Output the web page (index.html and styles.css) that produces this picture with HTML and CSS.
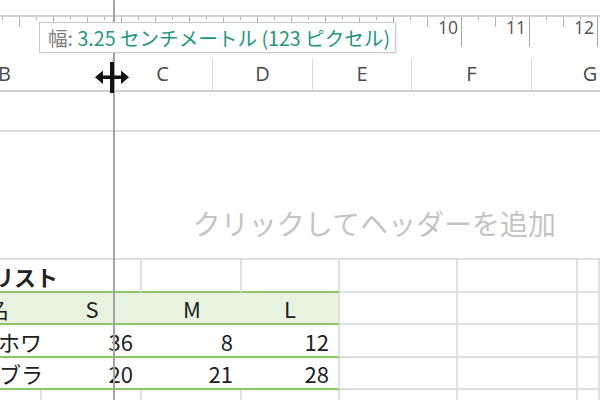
FILE: index.html
```html
<!DOCTYPE html>
<html lang="ja">
<head>
<meta charset="utf-8">
<title>Excel ページレイアウト</title>
<link rel="stylesheet" href="styles.css">
</head>
<body>
<div class="sheet">
  <div class="topgap"></div>
  <div class="ruler">
    <div class="cm"></div>
    <div class="cm"></div>
    <div class="cm"></div>
    <div class="cm"></div>
    <div class="cm"></div>
    <div class="cm"></div>
    <div class="cm"></div>
    <div class="cm"><span class="num">10</span></div>
    <div class="cm"><span class="num">11</span></div>
    <div class="cm"><span class="num">12</span></div>
  </div>
  <div class="colhead">
    <div class="col col-b">B</div>
    <div class="col col-c">C</div>
    <div class="col col-d">D</div>
    <div class="col col-e">E</div>
    <div class="col col-f">F</div>
    <div class="col col-g">G</div>
  </div>
  <div class="margin-band"></div>
  <div class="page-header">
    <span class="header-hint">クリックしてヘッダーを追加</span>
  </div>
  <div class="grid">
    <div class="row title-row">
      <div class="cell a tb nob"><span class="t-title">リスト</span></div>
      <div class="cell tb"></div>
      <div class="cell tb"></div>
      <div class="cell tb"></div>
      <div class="cell"></div>
      <div class="cell"></div>
      <div class="cell"></div>
    </div>
    <div class="row head-row">
      <div class="cell a tb nob hd"><span class="t-name">名</span></div>
      <div class="cell tb nob hd ctr">S</div>
      <div class="cell tb nob hd ctr">M</div>
      <div class="cell tb hd ctr">L</div>
      <div class="cell"></div>
      <div class="cell"></div>
      <div class="cell"></div>
    </div>
    <div class="row">
      <div class="cell a tb nob"><span class="t-white">ホワイト</span></div>
      <div class="cell tb nob num-cell">36</div>
      <div class="cell tb nob num-cell">8</div>
      <div class="cell tb num-cell">12</div>
      <div class="cell"></div>
      <div class="cell"></div>
      <div class="cell"></div>
    </div>
    <div class="row">
      <div class="cell a tb nob"><span class="t-black">ブラック</span></div>
      <div class="cell tb nob num-cell">20</div>
      <div class="cell tb nob num-cell">21</div>
      <div class="cell tb num-cell">28</div>
      <div class="cell"></div>
      <div class="cell"></div>
      <div class="cell"></div>
    </div>
    <div class="row">
      <div class="cell"></div>
      <div class="cell"></div>
      <div class="cell"></div>
      <div class="cell"></div>
      <div class="cell"></div>
      <div class="cell"></div>
      <div class="cell"></div>
    </div>
  </div>

  <div class="guide"></div>
  <div class="tooltip"><span class="tip-label">幅: </span><span class="tip-value">3.25 センチメートル (123 ピクセル)</span></div>
  <svg class="cursor" width="36" height="32" viewBox="0 0 36 32" aria-hidden="true">
    <rect x="15" y="0" width="4" height="31" fill="#111"/>
    <rect x="5" y="13.5" width="24" height="3.5" fill="#111"/>
    <polygon points="0,15.25 8,8.5 8,22" fill="#111"/>
    <polygon points="34,15.25 26,8.5 26,22" fill="#111"/>
  </svg>
</div>
</body>
</html>
```

FILE: styles.css
```css
html, body {
  margin: 0;
  padding: 0;
  background: #ffffff;
}

.sheet {
  position: relative;
  width: 600px;
  height: 400px;
  overflow: hidden;
  background: #ffffff;
  font-family: "Noto Sans CJK JP", "Noto Sans", sans-serif;
  color: #333;
}

.topgap {
  height: 15px;
}

/* ruler */
.ruler {
  display: flex;
  height: 30px;
  border-top: 2px solid #d2d2d2;
  margin-left: -82px;
}

.cm {
  flex: 0 0 68px;
  box-sizing: border-box;
  height: 30px;
  border-right: 1px solid #a6a6a6;
  display: flex;
  justify-content: flex-end;
  align-items: flex-start;
  background-image:
    linear-gradient(#b4b4b4, #b4b4b4),
    linear-gradient(#b4b4b4, #b4b4b4),
    linear-gradient(#b4b4b4, #b4b4b4);
  background-repeat: no-repeat;
  background-size: 1px 3px, 1px 10px, 1px 3px;
  background-position: 16px 0, 33px 0, 50px 0;
}

.num {
  font-family: "Open Sans", "Noto Sans", sans-serif;
  font-size: 17.5px;
  line-height: 15px;
  color: #555;
  background: #fff;
  margin-top: 3px;
  padding: 0 3px 0 1px;
}

/* column header */
.colhead {
  display: flex;
  height: 34px;
  margin-top: 11px;
  margin-left: -103px;
  box-sizing: border-box;
  border-bottom: 2px solid #cfcfcf;
}

.col {
  box-sizing: border-box;
  border-right: 1px solid #dadada;
  display: flex;
  align-items: center;
  justify-content: center;
  font-family: "Open Sans", "Noto Sans", sans-serif;
  font-size: 20px;
  color: #4a4a4a;
  padding-bottom: 2px;
}

.col-b { flex: 0 0 216px; }
.col-c { flex: 0 0 100px; }
.col-d { flex: 0 0 100px; }
.col-e { flex: 0 0 99px; }
.col-f { flex: 0 0 120px; }
.col-g { flex: 0 0 116px; border-right: none; }

.margin-band {
  height: 38px;
  border-bottom: 2px solid #dcdcdc;
}

.page-header {
  height: 126px;
  display: flex;
  justify-content: flex-end;
  align-items: flex-end;
  padding-right: 44px;
  box-sizing: border-box;
  padding-bottom: 18px;
}

.header-hint {
  font-size: 28px;
  line-height: 34px;
  color: #c4c4c4;
}

/* grid */
.grid {
  border-top: 2px solid #dedede;
}

.row {
  display: grid;
  grid-template-columns: 42px 100px 100px 98px 118px 120px 1fr;
  height: 32.5px;
}

.cell {
  box-sizing: border-box;
  border-right: 2px solid #e0e0e0;
  border-bottom: 2px solid #e0e0e0;
  display: flex;
  align-items: flex-end;
  padding-bottom: 2px;
  font-size: 22px;
  line-height: 26px;
  color: #222;
  white-space: nowrap;
  overflow: hidden;
}

.cell.tb {
  border-bottom-color: #8dc667;
}

.cell.nob {
  border-right: none;
}

.cell.hd {
  background: #e8f3df;
}

.cell.ctr {
  justify-content: center;
}

.num-cell {
  justify-content: flex-end;
  padding-right: 9px;
}

.title-row .cell.a {
  overflow: visible;
}

.t-title {
  font-weight: bold;
  margin-left: -8px;
}

.t-name { margin-left: -13px; }
.t-white { margin-left: -2px; }
.t-black { margin-left: -1px; }

/* overlays */
.guide {
  position: absolute;
  left: 113px;
  top: 0;
  width: 1.5px;
  height: 400px;
  background: #a3a3a3;
}

.tooltip {
  position: absolute;
  left: 39px;
  top: 22px;
  height: 31px;
  box-sizing: border-box;
  padding: 0 5px 0 8px;
  display: flex;
  align-items: center;
  background: #fff;
  border: 1px solid #cbcbcb;
  box-shadow: 1px 1px 2px rgba(0, 0, 0, 0.08);
  font-size: 19.6px;
  white-space: pre;
}

.tip-label {
  color: #7f7f7f;
}

.tip-value {
  color: #23977a;
}

.cursor {
  position: absolute;
  left: 95px;
  top: 62px;
}
```
